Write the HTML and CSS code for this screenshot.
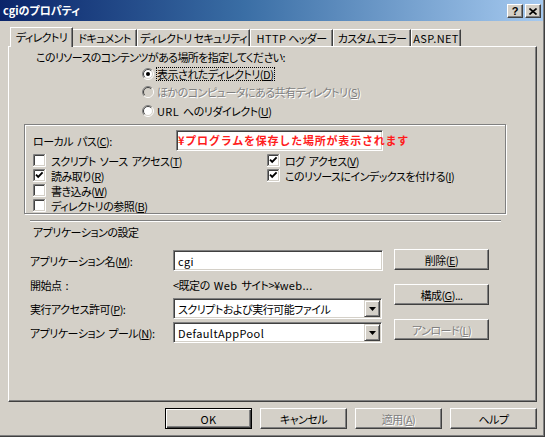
FILE: index.html
```html
<!DOCTYPE html>
<html lang="ja">
<head>
<meta charset="utf-8">
<title>cgiのプロパティ</title>
<link rel="stylesheet" href="styles.css">
</head>
<body>
<svg class="defs" width="0" height="0" aria-hidden="true">
  <defs>
    <symbol id="cb-box" viewBox="0 0 13 13">
      <rect x="2" y="2" width="9" height="9" fill="#fff"/>
      <path d="M0.5 12V0.5H12" stroke="#808080" fill="none"/>
      <path d="M0 12.5H12.5V0" stroke="#fff" fill="none"/>
      <path d="M1.5 11V1.5H11" stroke="#404040" fill="none"/>
      <path d="M1 11.5H11.5V1" stroke="#d4d0c8" fill="none"/>
    </symbol>
    <symbol id="cb-check" viewBox="0 0 13 13">
      <use href="#cb-box"/>
      <path d="M3 5.6L5.2 7.8L9.6 3.4" stroke="#000" stroke-width="1.9" fill="none"/>
    </symbol>
    <symbol id="radio" viewBox="0 0 12 12">
      <circle cx="6" cy="6" r="5" fill="#fff"/>
      <path d="M2.1 9.9A5.5 5.5 0 0 1 9.9 2.1" stroke="#808080" fill="none"/>
      <path d="M9.9 2.1A5.5 5.5 0 0 1 2.1 9.9" stroke="#fff" fill="none"/>
      <path d="M2.8 9.2A4.5 4.5 0 0 1 9.2 2.8" stroke="#404040" fill="none"/>
      <path d="M9.2 2.8A4.5 4.5 0 0 1 2.8 9.2" stroke="#d4d0c8" fill="none"/>
    </symbol>
    <symbol id="radio-on" viewBox="0 0 12 12">
      <use href="#radio"/>
      <circle cx="6" cy="6" r="2" fill="#000"/>
    </symbol>
    <symbol id="radio-off-dis" viewBox="0 0 12 12">
      <circle cx="6" cy="6" r="5" fill="#d4d0c8"/>
      <path d="M2.1 9.9A5.5 5.5 0 0 1 9.9 2.1" stroke="#808080" fill="none"/>
      <path d="M9.9 2.1A5.5 5.5 0 0 1 2.1 9.9" stroke="#fff" fill="none"/>
      <path d="M2.8 9.2A4.5 4.5 0 0 1 9.2 2.8" stroke="#404040" fill="none"/>
      <path d="M9.2 2.8A4.5 4.5 0 0 1 2.8 9.2" stroke="#d4d0c8" fill="none"/>
    </symbol>
    <symbol id="arrow" viewBox="0 0 7 4">
      <path d="M0 0H7L3.5 4Z" fill="#000"/>
    </symbol>
  </defs>
</svg>

<div class="window">
  <div class="titlebar">
    <span class="title">cgiのプロパティ</span>
    <div class="caption-buttons">
      <span class="cap-btn cap-help">?</span>
      <span class="cap-btn"><svg width="8" height="7" viewBox="0 0 8 7"><path d="M0.5 0.5L7.5 6.5M7.5 0.5L0.5 6.5" stroke="#000" stroke-width="1.6"/></svg></span>
    </div>
  </div>

  <div class="tabs">
    <div class="tab tab-active tab-dir">ディレクトリ</div>
    <div class="tab tab-doc">ドキュメント</div>
    <div class="tab tab-sec">ディレクトリ セキュリティ</div>
    <div class="tab tab-http"><span class="lat">HTTP</span> ヘッダー</div>
    <div class="tab tab-err">カスタム エラー</div>
    <div class="tab tab-asp"><span class="lat">ASP.NET</span></div>
  </div>

  <div class="panel">
    <div class="intro">このリソースのコンテンツがある場所を指定してください:</div>
    <div class="radios">
      <div class="radio-row"><svg class="rb"><use href="#radio-on"/></svg><span class="focus">表示されたディレクトリ(<u>D</u>)</span></div>
      <div class="radio-row"><svg class="rb"><use href="#radio-off-dis"/></svg><span class="disabled">ほかのコンピュータにある共有ディレクトリ(<u>S</u>)</span></div>
      <div class="radio-row radio-last"><svg class="rb"><use href="#radio"/></svg><span><span class="lat">URL</span> へのリダイレクト(<u>U</u>)</span></div>
    </div>

    <div class="groupbox">
      <div class="path-row">
        <span class="path-label">ローカル パス(<u>C</u>):</span>
        <div class="edit path-edit"><span class="annot">¥プログラムを保存した場所が表示されます</span></div>
      </div>
      <div class="checks">
        <div class="check"><svg class="cb"><use href="#cb-box"/></svg><span>スクリプト ソース アクセス(<u>T</u>)</span></div>
        <div class="check"><svg class="cb"><use href="#cb-check"/></svg><span>ログ アクセス(<u>V</u>)</span></div>
        <div class="check"><svg class="cb"><use href="#cb-check"/></svg><span>読み取り(<u>R</u>)</span></div>
        <div class="check"><svg class="cb"><use href="#cb-check"/></svg><span>このリソースにインデックスを付ける(<u>I</u>)</span></div>
        <div class="check"><svg class="cb"><use href="#cb-box"/></svg><span>書き込み(<u>W</u>)</span></div>
        <div class="check-empty"></div>
        <div class="check"><svg class="cb"><use href="#cb-box"/></svg><span>ディレクトリの参照(<u>B</u>)</span></div>
      </div>
    </div>

    <div class="separator"></div>
    <div class="section-title">アプリケーションの設定</div>

    <div class="app">
      <div class="app-fields">
        <div class="field field-name">
          <span class="field-label">アプリケーション名(<u>M</u>):</span>
          <div class="edit app-edit"><span class="lat">cgi</span></div>
        </div>
        <div class="field field-start">
          <span class="field-label">開始点 :</span>
          <span class="field-value">&lt;既定の <span class="lat">Web</span> サイト&gt;¥<span class="lat">web...</span></span>
        </div>
        <div class="field field-exec">
          <span class="field-label">実行アクセス許可(<u>P</u>):</span>
          <div class="select"><span class="select-text">スクリプトおよび実行可能ファイル</span><span class="drop"><svg width="7" height="4"><use href="#arrow"/></svg></span></div>
        </div>
        <div class="field field-pool">
          <span class="field-label">アプリケーション プール(<u>N</u>):</span>
          <div class="select"><span class="select-text lat">DefaultAppPool</span><span class="drop"><svg width="7" height="4"><use href="#arrow"/></svg></span></div>
        </div>
      </div>
      <div class="app-buttons">
        <div class="btn">削除(<u>E</u>)</div>
        <div class="btn">構成(<u>G</u>)...</div>
        <div class="btn"><span class="disabled">アンロード(<u>L</u>)</span></div>
      </div>
    </div>
  </div>

  <div class="footer">
    <div class="btn btn-foot btn-default"><span class="lat">OK</span></div>
    <div class="btn btn-foot">キャンセル</div>
    <div class="btn btn-foot"><span class="disabled">適用(<u>A</u>)</span></div>
    <div class="btn btn-foot">ヘルプ</div>
  </div>
</div>
</body>
</html>
```

FILE: styles.css
```css
* { box-sizing: border-box; }

html, body {
  margin: 0;
  padding: 0;
  background: #d4d0c8;
}

body {
  width: 545px;
  height: 437px;
  overflow: hidden;
  font-family: "Noto Sans CJK JP", "Noto Sans", sans-serif;
  font-feature-settings: "palt";
  font-size: 11px;
  letter-spacing: -0.5px;
  word-spacing: 2px;
  line-height: 12px;
  color: #000;
}

.lat { letter-spacing: 0.4px; }

.defs { position: absolute; width: 0; height: 0; overflow: hidden; }

u { text-decoration: underline; text-underline-offset: 1px; text-decoration-thickness: 1px; }

.window {
  width: 545px;
  height: 437px;
  background: #d4d0c8;
  border-right: 1px solid #404040;
  border-bottom: 1px solid #404040;
  box-shadow: inset -1px -1px 0 #808080;
}

/* title bar */
.titlebar {
  width: 543px;
  height: 21px;
  display: flex;
  align-items: flex-start;
  padding: 0 2px 0 3px;
  background: linear-gradient(to right, #0a246a 0%, #3a6ea5 45%, #a6caf0 100%);
}

.title {
  color: #fff;
  font-weight: bold;
  font-size: 11px;
  line-height: 21px;
  letter-spacing: 0;
}

.caption-buttons {
  margin-left: auto;
  margin-top: 4px;
  display: flex;
  gap: 2px;
}

.cap-btn {
  width: 16px;
  height: 14px;
  display: flex;
  align-items: center;
  justify-content: center;
  background: #d4d0c8;
  border: 1px solid;
  border-color: #fff #404040 #404040 #fff;
  box-shadow: inset -1px -1px 0 #808080;
}

.cap-help {
  font-family: "Liberation Sans", sans-serif;
  font-weight: bold;
  font-size: 11px;
  line-height: 11px;
  letter-spacing: 0;
}

/* tabs */
.tabs {
  display: flex;
  align-items: flex-end;
  height: 19px;
  margin-top: 6px;
  margin-left: 8px;
  padding-left: 2px;
}

.tab {
  height: 17px;
  display: flex;
  align-items: center;
  justify-content: center;
  white-space: pre;
  word-spacing: 0;
  letter-spacing: -0.6px;
  border-left: 1px solid #fff;
  border-top: 1px solid #fff;
  border-right: 1px solid #404040;
  box-shadow: inset -1px 0 0 #808080;
  background: #d4d0c8;
}

.tab-active {
  height: 20px;
  margin-bottom: -1px;
  position: relative;
  z-index: 1;
  padding-bottom: 2px;
}

.tab-dir { width: 63px; }
.tab-doc { width: 64px; border-left: none; }
.tab-sec { width: 113px; }
.tab-http { width: 83px; }
.tab-err { width: 78px; }
.tab-asp { width: 50px; }

/* panel */
.panel {
  margin-left: 8px;
  width: 529px;
  height: 356px;
  border-left: 1px solid #fff;
  border-top: 1px solid #fff;
  border-right: 1px solid #404040;
  border-bottom: 1px solid #404040;
  box-shadow: inset -1px -1px 0 #808080;
}

.intro {
  margin-top: 4px;
  margin-left: 27px;
  height: 12px;
  white-space: nowrap;
  letter-spacing: -0.6px;
}

.radios {
  margin-top: 2px;
  margin-left: 133px;
}

.radio-row {
  height: 18px;
  display: flex;
  align-items: center;
  gap: 3px;
  white-space: nowrap;
}

.radio-last { margin-top: 1px; }

.rb { width: 12px; height: 12px; flex: none; }

.focus {
  display: inline-block;
  border: 1px dotted #000;
  padding: 0 1px 0 0;
  line-height: 12px;
  margin-left: -1px;
}

.disabled {
  color: #808080;
  text-shadow: 1px 1px 0 #fff;
}

/* group box */
.groupbox {
  margin-top: 4px;
  margin-left: 15px;
  width: 482px;
  height: 90px;
  border: 1px solid #808080;
  box-shadow: inset 1px 1px 0 #fff, 1px 1px 0 #fff;
  padding-left: 8px;
}

.path-row {
  margin-top: 5px;
  display: flex;
  align-items: center;
  height: 21px;
}

.path-label { width: 143px; white-space: nowrap; }

.edit {
  height: 21px;
  background: #fff;
  border: 1px solid;
  border-color: #808080 #fff #fff #808080;
  box-shadow: inset 1px 1px 0 #404040, inset -1px -1px 0 #d4d0c8;
  display: flex;
  align-items: center;
  padding-left: 4px;
  white-space: nowrap;
}

.path-edit {
  width: 207px;
  padding-left: 1px;
  overflow: visible;
}

.annot {
  color: #ff1c1c;
  font-weight: bold;
  font-size: 11px;
  font-feature-settings: normal;
  letter-spacing: 0.8px;
  line-height: 11px;
  position: relative;
  z-index: 1;
}

.checks {
  margin-top: 2px;
  display: grid;
  grid-template-columns: 234px auto;
  grid-auto-rows: 15px;
}

.check {
  display: flex;
  align-items: center;
  gap: 5px;
  white-space: nowrap;
  height: 15px;
}

.cb { width: 13px; height: 13px; flex: none; }

/* application settings */
.separator {
  margin-top: 6px;
  margin-left: 21px;
  width: 471px;
  height: 2px;
  border-top: 1px solid #808080;
  border-bottom: 1px solid #fff;
}

.section-title {
  margin-top: 4px;
  margin-left: 24px;
  height: 12px;
  white-space: nowrap;
}

.app {
  margin-top: 11px;
  margin-left: 21px;
  display: flex;
  align-items: flex-start;
}

.app-fields {
  width: 353px;
  margin-top: 1px;
}

.field {
  display: flex;
  align-items: center;
  height: 21px;
  white-space: nowrap;
}

.field-start { height: 20px; margin-top: 4px; }
.field-exec { margin-top: 3px; }
.field-pool { margin-top: 3px; }

.field-label { width: 143px; }

.app-edit { width: 210px; }

.select {
  width: 209px;
  height: 21px;
  background: #fff;
  border: 1px solid;
  border-color: #808080 #fff #fff #808080;
  box-shadow: inset 1px 1px 0 #404040, inset -1px -1px 0 #d4d0c8;
  display: flex;
  align-items: center;
  padding: 1px 1px 1px 4px;
}

.select-text { flex: 1; white-space: nowrap; }

.drop {
  width: 16px;
  height: 17px;
  display: flex;
  align-items: center;
  justify-content: center;
  background: #d4d0c8;
  border: 1px solid;
  border-color: #d4d0c8 #404040 #404040 #d4d0c8;
  box-shadow: inset 1px 1px 0 #fff, inset -1px -1px 0 #808080;
}

.app-buttons {
  margin-left: 11px;
  display: flex;
  flex-direction: column;
  gap: 14px;
}

.btn {
  width: 95px;
  height: 21px;
  display: flex;
  align-items: center;
  justify-content: center;
  background: #d4d0c8;
  border: 1px solid;
  border-color: #fff #404040 #404040 #fff;
  box-shadow: inset -1px -1px 0 #808080;
  white-space: nowrap;
}

/* footer */
.footer {
  margin-top: 6px;
  display: flex;
  justify-content: flex-end;
  gap: 8px;
  padding-right: 7px;
}

.btn-foot { width: 87px; }

.btn-default {
  border: 1px solid #000;
  box-shadow: inset 1px 1px 0 #fff, inset -1px -1px 0 #404040, inset -2px -2px 0 #808080;
}
```
